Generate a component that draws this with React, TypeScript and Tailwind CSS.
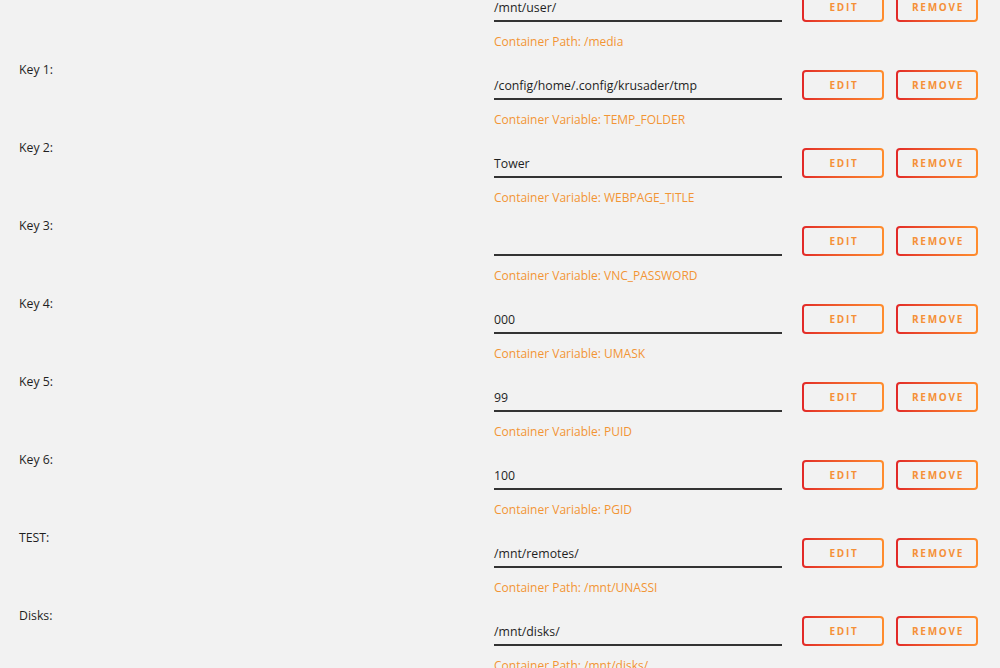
const rows = [
  { label: "", value: "/mnt/user/", hint: "Container Path: /media" },
  { label: "Key 1:", value: "/config/home/.config/krusader/tmp", hint: "Container Variable: TEMP_FOLDER" },
  { label: "Key 2:", value: "Tower", hint: "Container Variable: WEBPAGE_TITLE" },
  { label: "Key 3:", value: "", hint: "Container Variable: VNC_PASSWORD" },
  { label: "Key 4:", value: "000", hint: "Container Variable: UMASK" },
  { label: "Key 5:", value: "99", hint: "Container Variable: PUID" },
  { label: "Key 6:", value: "100", hint: "Container Variable: PGID" },
  { label: "TEST:", value: "/mnt/remotes/", hint: "Container Path: /mnt/UNASSI" },
  { label: "Disks:", value: "/mnt/disks/", hint: "Container Path: /mnt/disks/" },
];

function OutlineButton({ children }: { children: string }) {
  return (
    <div className="w-[82px] h-[30px] p-[2px] rounded-[4px] bg-gradient-to-r from-[#e22828] to-[#ff8d2e]">
      <button className="w-full h-full rounded-[2px] bg-[#f2f2f2] flex items-center justify-center text-[10px] font-bold tracking-[1.7px] text-[#f59038] uppercase pl-[2px] pt-[1px]">
        {children}
      </button>
    </div>
  );
}

export default function App() {
  return (
    <div
      className="min-h-[668px] bg-[#f2f2f2] overflow-hidden text-[12.3px] text-[#1f1f1f]"
      style={{ fontFamily: '"Open Sans", "Noto Sans", sans-serif' }}
    >
      <div className="-mt-[18px]">
        {rows.map((row, i) => (
          <div key={i} className="flex h-[78px]">
            <div className="w-[494px] pl-[19px] pt-[1px] leading-[18px]">{row.label}</div>
            <div className="pt-[10px]">
              <div className="flex">
                <div className="w-[288px] h-[30px] border-b-2 border-[#333] flex items-center pt-[3px] leading-[18px]">
                  {row.value}
                </div>
                <div className="ml-[20px] flex gap-[12px]">
                  <OutlineButton>Edit</OutlineButton>
                  <OutlineButton>Remove</OutlineButton>
                </div>
              </div>
              <div className="mt-[11px] leading-[18px] text-[12px] text-[#f29535]">{row.hint}</div>
            </div>
          </div>
        ))}
      </div>
    </div>
  );
}
